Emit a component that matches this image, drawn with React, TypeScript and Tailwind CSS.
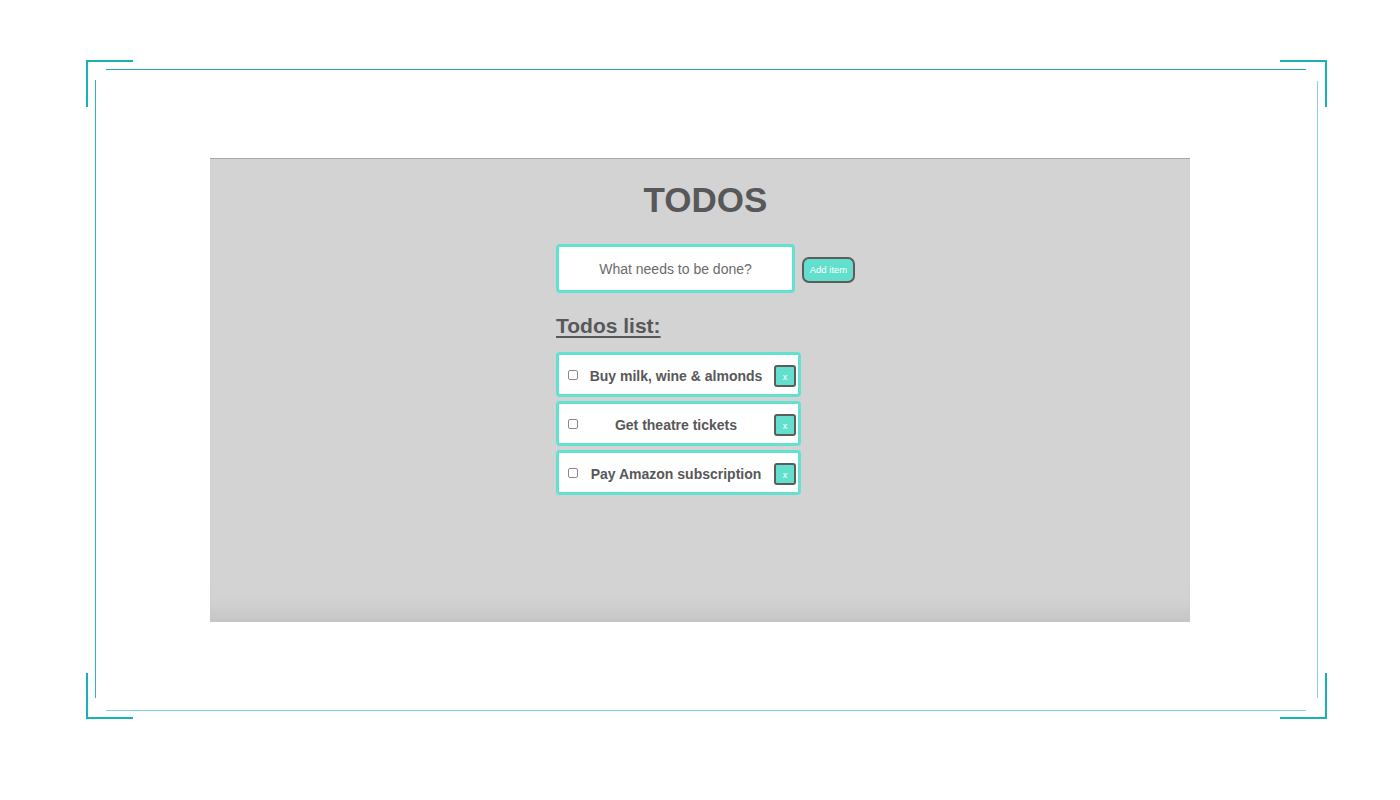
import React from "react";

const todos = ["Buy milk, wine & almonds", "Get theatre tickets", "Pay Amazon subscription"];

export default function App() {
  return (
    <div className="w-full h-[800px] bg-white overflow-hidden pt-[60px] pl-[86px]" style={{ fontFamily: '"Liberation Sans", Arial, sans-serif' }}>
      <div className="grid w-[1241px] h-[659px] grid-cols-[9px_1px_10px_1200px_11px_1px_9px] grid-rows-[9px_1px_10px_618px_12px_1px_8px]">
        {/* corner brackets */}
        <div className="col-start-1 col-span-4 row-start-1 row-span-4 self-start justify-self-start w-[47px] h-[47px] border-t-2 border-l-2 border-[#17b3b4]" />
        <div className="col-start-4 col-span-4 row-start-1 row-span-4 self-start justify-self-end w-[47px] h-[47px] border-t-2 border-r-2 border-[#17b3b4]" />
        <div className="col-start-1 col-span-4 row-start-4 row-span-4 self-end justify-self-start w-[47px] h-[46px] border-b-2 border-l-2 border-[#17b3b4]" />
        <div className="col-start-4 col-span-4 row-start-4 row-span-4 self-end justify-self-end w-[47px] h-[46px] border-b-2 border-r-2 border-[#17b3b4]" />

        {/* inner lines */}
        <div className="col-start-4 row-start-2 bg-[#1aa8a8]" />
        <div className="col-start-2 row-start-4 bg-[#2cb8b8]" />
        <div className="col-start-4 row-start-6 bg-[#7fd6d6]" />
        <div className="col-start-6 row-start-4 mt-[1px] bg-[#86dada]" />

        {/* app panel */}
        <div className="col-start-4 row-start-4 self-start justify-self-start ml-[104px] mt-[78px] w-[980px] h-[464px] bg-[#d3d3d3] border-t border-[#a8a8a8] shadow-[inset_0_-22px_26px_-18px_rgba(0,0,0,0.11)] flex flex-col items-start pl-[346px] pt-[21px]">
          <h1 className="w-[299px] text-center text-[35px] leading-[40px] font-bold text-[#58585a]">TODOS</h1>

          <div className="mt-[24px] flex items-center gap-[7px]">
            <input
              className="w-[239px] h-[49px] bg-white border-[3px] border-[#63e1d0] rounded-[4px] text-center text-[14px] text-[#555] placeholder:text-[#6b6b6b] outline-none"
              placeholder="What needs to be done?"
            />
            <button className="w-[53px] h-[26px] mt-[3px] bg-[#62e0cd] border-2 border-[#5c5c5c] rounded-[7px] text-white text-[9.5px] leading-none">
              Add item
            </button>
          </div>

          <h2 className="mt-[21px] text-[21px] leading-[24px] font-bold text-[#58585a] underline decoration-2 underline-offset-[3px]">
            Todos list:
          </h2>

          <div className="mt-[14px] flex flex-col gap-[4px]">
            {todos.map((t) => (
              <div
                key={t}
                className="w-[245px] h-[45px] bg-white border-[3px] border-[#63e1d0] rounded-[4px] flex items-center pl-[9px] pr-[2px]"
              >
                <div className="w-[10px] h-[10px] border border-[#8a8a8a] rounded-[2px] bg-white shrink-0" />
                <div className="flex-1 text-center text-[14px] leading-[18px] pt-[2px] font-bold text-[#58585a] whitespace-nowrap">{t}</div>
                <button className="w-[22px] h-[22px] mt-[3px] shrink-0 bg-[#62e0cd] border-2 border-[#5c5c5c] rounded-[3px] text-white text-[9px] leading-none flex items-center justify-center pt-[3px]">
                  x
                </button>
              </div>
            ))}
          </div>
        </div>
      </div>
    </div>
  );
}
